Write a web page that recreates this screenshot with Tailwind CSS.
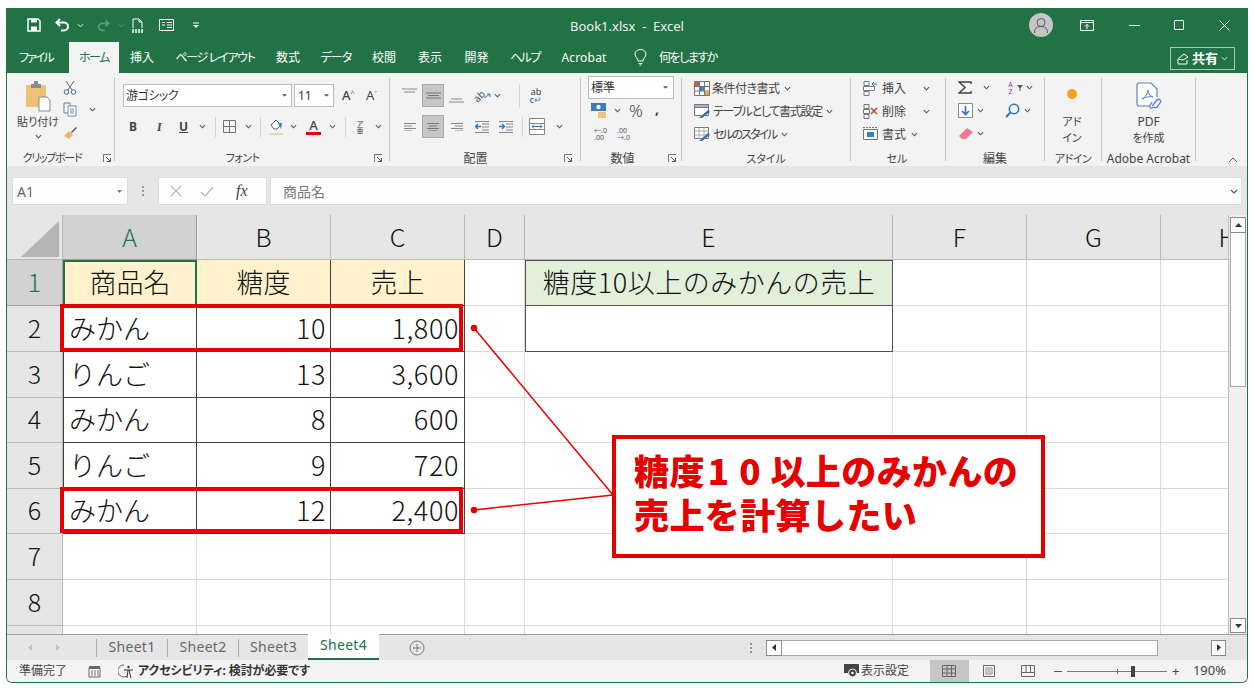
<!DOCTYPE html>
<html lang="ja">
<head>
<meta charset="utf-8">
<title>Book1.xlsx - Excel</title>
<script src="https://cdn.jsdelivr.net/npm/@tailwindcss/browser@4"></script>
</head>
<body class="w-[1254px] h-[688px] overflow-hidden bg-white font-['Noto_Sans','Noto_Sans_CJK_JP',sans-serif]">
<svg class="hidden">
  <symbol id="c" viewBox="0 0 8 5"><path d="M1 1l3 3 3-3" fill="none" stroke="#555" stroke-width="1.2"/></symbol>
  <symbol id="l" viewBox="0 0 9 9"><path d="M.5 8V.5H8" fill="none" stroke="#777"/><path d="M3 3l4.500 4.500M7.500 4v3.500H4" fill="none" stroke="#555"/></symbol>
</svg>

<div class="relative mx-[6px] mt-[8px] w-[1242px] h-[675px] flex flex-col border-x border-b border-[#217346] rounded-b-[6px] overflow-hidden [font-feature-settings:'palt'] text-[#444]">

  <!-- title bar -->
  <div class="h-[34px] flex items-center bg-[#217346] text-white">
    <div class="w-[563px] flex items-center pl-[20px]">
      <svg class="w-[14px] h-[14px]" viewBox="0 0 14 14"><path d="M1 1h10l2 2v10H1z" fill="none" stroke="#fff" stroke-width="1.500"/><path d="M4 1.500h6v3H4z" fill="#fff"/><path d="M4 8.500h6V13H4z" fill="#fff"/></svg>
      <svg class="w-[16px] h-[14px] ml-[14px]" viewBox="0 0 16 14"><path d="M5 1L1.500 4.500 5 8M2 4.500h7a4 4 0 0 1 0 8H6" fill="none" stroke="#fff" stroke-width="2"/></svg>
      <svg class="w-[7px] h-[5px] ml-[6px]" viewBox="0 0 8 5"><path d="M1 1l3 3 3-3" fill="none" stroke="#fff"/></svg>
      <svg class="w-[14px] h-[13px] ml-[12px]" viewBox="0 0 16 14"><path d="M11 1l3.500 3.500L11 8M14 4.500H7a4 4 0 0 0 0 8h3" fill="none" stroke="#5f9a79" stroke-width="2"/></svg>
      <svg class="w-[7px] h-[5px] ml-[8px]" viewBox="0 0 8 5"><path d="M1 1l3 3 3-3" fill="none" stroke="#5f9a79"/></svg>
      <svg class="w-[13px] h-[15px] ml-[6px]" viewBox="0 0 13 15"><path d="M2 10V1h6l3 3v6M8 1v3h3" fill="none" stroke="#fff"/><path d="M1 12h11M1 14h11" stroke="#fff" stroke-dasharray="2 1" stroke-width="1.400"/></svg>
      <svg class="w-[15px] h-[12px] ml-[15px]" viewBox="0 0 15 12"><path d="M.5.500h14v11H.5z" fill="none" stroke="#fff"/><path d="M3 3.500h3M8 3.500h5M3 6h3M8 6h5M8 8.500h5" stroke="#fff"/></svg>
      <svg class="w-[6px] h-[6px] ml-[19px]" viewBox="0 0 6 6"><path d="M0 1h6" stroke="#fff"/><path d="M0 3h6L3 6z" fill="#fff"/></svg>
    </div>
    <div class="text-[13px] mt-[4px] [font-feature-settings:normal] text-[#f0f0f0] whitespace-pre">Book1.xlsx  -  Excel</div>
    <div class="flex-1 flex items-center justify-end">
      <div class="w-[24px] h-[24px] rounded-full bg-[#c6c6c6] flex items-center justify-center mr-[27px]">
        <svg class="w-[18px] h-[18px]" viewBox="0 0 18 18"><circle cx="9" cy="6.500" r="4" fill="none" stroke="#555"/><path d="M2.500 17c0-5 3-6.500 6.500-6.500s6.500 1.500 6.500 6.500" fill="none" stroke="#555"/></svg>
      </div>
      <svg class="w-[14px] h-[11px] mr-[35px]" viewBox="0 0 14 11"><path d="M.5.500h13v10H.5z" fill="none" stroke="#fff"/><path d="M.5 2.500h13" stroke="#fff"/><path d="M7 9V4.500M5 6.500l2-2 2 2" fill="none" stroke="#fff"/></svg>
      <div class="w-[11px] h-px bg-white mr-[34px]"></div>
      <div class="w-[10px] h-[10px] border border-white rounded-[1px] mr-[35px]"></div>
      <svg class="w-[11px] h-[11px] mr-[17px]" viewBox="0 0 11 11"><path d="M.5.500l10 10M10.500.500l-10 10" stroke="#fff"/></svg>
    </div>
  </div>

  <!-- tabs -->
  <div class="h-[31px] flex items-end bg-[#217346] text-white text-[12px] leading-[31px] whitespace-nowrap">
    <div class="w-[57px] ml-[5px] text-left pl-[7px] tracking-[-2px]">ファイル</div>
    <div class="w-[50px] h-[31px] bg-[#f3f3f3] text-[#217346] text-center tracking-[-1.500px]">ホーム</div>
    <div class="w-[46px] text-center">挿入</div>
    <div class="w-[100px] text-center tracking-[-1.300px]">ページ レイアウト</div>
    <div class="w-[46px] text-center">数式</div>
    <div class="w-[50px] text-center tracking-[-1px]">データ</div>
    <div class="w-[46px] text-center">校閲</div>
    <div class="w-[46px] text-center">表示</div>
    <div class="w-[47px] text-center">開発</div>
    <div class="w-[50px] text-center tracking-[-1.500px]">ヘルプ</div>
    <div class="w-[68px] text-center tracking-[0.200px]">Acrobat</div>
    <div class="flex items-center h-[31px] pl-[16px]">
      <svg class="w-[13px] h-[17px]" viewBox="0 0 13 17"><path d="M4 12c0-3-3-3.500-3-7a5.500 4.500 0 0 1 11 0c0 3.500-3 4-3 7zM4.500 14.500h4M5.500 16h2" fill="none" stroke="#fff"/></svg>
      <span class="ml-[12px] tracking-[-1.500px]">何をしますか</span>
    </div>
    <div class="ml-auto mr-[12px] mb-[3px] w-[65px] h-[23px] border border-[#a9c9b6] flex items-center justify-center gap-[3px] leading-none">
      <svg class="w-[12px] h-[12px]" viewBox="0 0 12 12"><path d="M1 6v5h9V7M1 6l6-5 4 3-5 3z" fill="none" stroke="#fff"/></svg>
      <span class="font-bold text-[13px]">共有</span>
      <svg class="w-[7px] h-[5px]" viewBox="0 0 8 5"><path d="M1 1l3 3 3-3" fill="none" stroke="#fff"/></svg>
    </div>
  </div>

  <!-- ribbon -->
  <div class="h-[93px] bg-[#f3f3f3] flex text-[11px] text-[#444]">

    <!-- clipboard -->
    <div class="w-[107px] flex flex-col">
      <div class="h-[78px] flex pl-[9px]">
        <div class="w-[44px] flex flex-col items-center">
          <svg class="w-[26px] h-[32px] mt-[7px]" viewBox="0 0 26 32"><path d="M1 5h20v22H1z" fill="#eec27b"/><path d="M6 4h10v4H6z" fill="#8c8c8c"/><path d="M9 1h4v4H9z" fill="#8c8c8c"/><path d="M14 17h8l3 3v11H14z" fill="#fff" stroke="#8a8a8a"/></svg>
          <div class="mt-[3px] leading-[14px] whitespace-nowrap">貼り付け</div>
          <svg class="w-[7px] h-[5px] mt-[5px]"><use href="#c"/></svg>
        </div>
        <div class="ml-[3px] flex flex-col pt-[7px]">
          <svg class="w-[14px] h-[15px]" viewBox="0 0 14 15"><path d="M3 1l6 9M11 1L5 10" stroke="#666" fill="none"/><circle cx="3.500" cy="12" r="2.300" fill="none" stroke="#3e6f9e"/><circle cx="10.500" cy="12" r="2.300" fill="none" stroke="#3e6f9e"/></svg>
          <div class="flex items-center mt-[7px]">
            <svg class="w-[14px] h-[15px]" viewBox="0 0 14 15"><path d="M1 1h6v10H1z" fill="#fff" stroke="#777"/><path d="M5 4h8v10H5z" fill="#fff" stroke="#6a8fb5"/><path d="M7 7h4M7 9h4M7 11h4" stroke="#6a8fb5"/></svg>
            <svg class="w-[7px] h-[5px] ml-[12px]"><use href="#c"/></svg>
          </div>
          <svg class="w-[15px] h-[14px] mt-[9px]" viewBox="0 0 15 14"><path d="M1 10l5-5 4 4-4 4z" fill="#e3b96c"/><path d="M8 6l5-5 1 1-5 5z" fill="#555"/></svg>
        </div>
      </div>
      <div class="h-[15px] flex items-center">
        <div class="w-[90px] text-center whitespace-nowrap tracking-[-1.300px]">クリップボード</div>
        <svg class="w-[9px] h-[9px] ml-[6px]"><use href="#l"/></svg>
      </div>
    </div>
    <div class="w-px my-[5px] bg-[#c6c6c6]"></div>

    <!-- font -->
    <div class="w-[274px] flex flex-col">
      <div class="h-[78px] pl-[8px]">
        <div class="flex items-center mt-[11px] h-[23px]">
          <div class="w-[169px] h-[23px] bg-white border border-[#bdbdbd] flex items-center px-[2px] text-[12px] text-[#333] tracking-[-0.500px]">游ゴシック<svg class="ml-auto mr-[2px] w-[5px] h-[3px]" viewBox="0 0 6 3"><path d="M0 0h6L3 3z" fill="#555"/></svg></div>
          <div class="w-[40px] h-[23px] ml-[2px] bg-white border border-[#bdbdbd] flex items-center pl-[3px] text-[12px] text-[#333]">11<svg class="ml-auto mr-[4px] w-[5px] h-[3px]" viewBox="0 0 6 3"><path d="M0 0h6L3 3z" fill="#555"/></svg></div>
          <div class="ml-[8px] text-[13px] w-[24px] font-medium">A<sup class="text-[7px] text-[#2b7cc1]">^</sup></div>
          <div class="text-[13px] w-[20px]">A<sup class="text-[7px] text-[#2b7cc1]">ˇ</sup></div>
        </div>
        <div class="flex items-center mt-[8px] h-[23px] text-[#444]">
          <div class="w-[24px] ml-[-2px] pl-[8px] font-bold text-[12px]">B</div>
          <div class="w-[25px] ml-[2px] pl-[10px] italic font-bold text-[12px] font-['Liberation_Serif']">I</div>
          <div class="w-[24px] pl-[7px] font-bold text-[12px] underline">U</div>
          <svg class="w-[7px] h-[5px] ml-[3px]"><use href="#c"/></svg>
          <div class="w-px h-[20px] bg-[#d4d4d4] ml-[9px]"></div>
          <svg class="w-[13px] h-[13px] ml-[7px]" viewBox="0 0 13 13"><path d="M.5.500h12v12H.5zM6.500.500v12M.5 6.500h12" fill="none" stroke="#777"/></svg>
          <svg class="w-[7px] h-[5px] ml-[9px]"><use href="#c"/></svg>
          <div class="w-px h-[20px] bg-[#d4d4d4] ml-[8px]"></div>
          <svg class="w-[16px] h-[19px] ml-[7px]" viewBox="0 0 16 19"><path d="M3 8l5-5 5 5-4 4H6z" fill="#fff" stroke="#666"/><path d="M10 6h4l-1 6z" fill="#3b82c4"/><path d="M1 16h14v2H1z" fill="#cfe3bd"/></svg>
          <svg class="w-[7px] h-[5px] ml-[6px]"><use href="#c"/></svg>
          <div class="w-[15px] ml-[9px] flex flex-col items-center leading-none">
            <span class="text-[13px] font-medium leading-[14px]">A</span>
            <span class="w-[15px] h-[3px] bg-[#e60000]"></span>
          </div>
          <svg class="w-[7px] h-[5px] ml-[8px]"><use href="#c"/></svg>
          <div class="w-px h-[20px] bg-[#d4d4d4] ml-[9px]"></div>
          <div class="ml-[9px] w-[10px] text-[7px] leading-[7px] text-center">ア<br>亜</div>
          <svg class="w-[7px] h-[5px] ml-[10px]"><use href="#c"/></svg>
        </div>
      </div>
      <div class="h-[15px] flex items-center">
        <div class="w-[255px] text-center whitespace-nowrap tracking-[-0.500px]">フォント</div>
        <svg class="w-[9px] h-[9px] ml-[4px]"><use href="#l"/></svg>
      </div>
    </div>
    <div class="w-px my-[5px] bg-[#c6c6c6]"></div>

    <!-- alignment -->
    <div class="w-[190px] flex flex-col">
      <div class="h-[78px] pl-[12px]">
        <div class="flex items-center mt-[11px] h-[23px]">
          <svg class="w-[15px] h-[8px] mb-[8px]" viewBox="0 0 15 8"><path d="M0 1h15M2 4h11" stroke="#888"/></svg>
          <div class="ml-[5px] w-[22px] h-[23px] bg-[#c6c6c6] border border-[#a8a8a8] flex items-center justify-center"><svg class="w-[15px] h-[7px]" viewBox="0 0 15 7"><path d="M0 1h15M2 3.500h11M0 6h15" stroke="#777"/></svg></div>
          <svg class="w-[15px] h-[8px] ml-[5px] mt-[8px]" viewBox="0 0 15 8"><path d="M2 3h11M0 6h15" stroke="#888"/></svg>
          <div class="w-[18px] h-[15px] ml-[9px] flex items-center">
            <span class="-rotate-45 text-[10px] leading-[10px] text-[#555]">ab</span>
            <svg class="w-[7px] h-[5px] -ml-[1px]" viewBox="0 0 7 5"><path d="M0 5l6-4M3 1h3v3" fill="none" stroke="#3b82c4"/></svg>
          </div>
          <svg class="w-[7px] h-[5px] ml-[3px]"><use href="#c"/></svg>
          <div class="w-px h-[24px] bg-[#d4d4d4] ml-[18px]"></div>
          <div class="w-[14px] ml-[9px] text-[9px] leading-[8px] text-center text-[#444]">ab<br>c<span class="text-[#3b82c4]">↵</span></div>
        </div>
        <div class="flex items-center mt-[8px] h-[23px]">
          <svg class="w-[12px] h-[8px] ml-[2px]" viewBox="0 0 12 8"><path d="M0 .5h12M0 3h8M0 5.500h12M0 8h8" stroke="#888"/></svg>
          <div class="ml-[6px] w-[22px] h-[23px] bg-[#c6c6c6] border border-[#a8a8a8] flex items-center justify-center"><svg class="w-[12px] h-[8px]" viewBox="0 0 12 8"><path d="M0 .5h12M2 3h8M0 5.500h12M2 8h8" stroke="#777"/></svg></div>
          <svg class="w-[12px] h-[8px] ml-[7px]" viewBox="0 0 12 8"><path d="M0 .5h12M4 3h8M0 5.500h12M4 8h8" stroke="#888"/></svg>
          <svg class="w-[14px] h-[12px] ml-[12px]" viewBox="0 0 14 12"><path d="M7 3h7M7 6h7M7 9h7M0 .5h14M0 11.500h14" stroke="#888"/><path d="M6 5.500H1M3 3L.5 5.500 3 8" fill="none" stroke="#2b7cc1" stroke-width="1.300"/></svg>
          <svg class="w-[14px] h-[12px] ml-[10px]" viewBox="0 0 14 12"><path d="M7 3h7M7 6h7M7 9h7M0 .5h14M0 11.500h14" stroke="#888"/><path d="M0 5.500h5M3 3l2.500 2.500L3 8" fill="none" stroke="#2b7cc1" stroke-width="1.300"/></svg>
          <div class="w-px h-[20px] bg-[#d4d4d4] ml-[9px]"></div>
          <svg class="w-[16px] h-[17px] ml-[6px]" viewBox="0 0 16 17"><path d="M.5.500h15v16H.5zM.5 5.500h15M.5 11.500h15" fill="#fff" stroke="#888"/><path d="M3 8.500h10M5 6.500l-2 2 2 2M11 6.500l2 2-2 2" fill="none" stroke="#2b7cc1"/></svg>
          <svg class="w-[7px] h-[5px] ml-[11px]"><use href="#c"/></svg>
        </div>
      </div>
      <div class="h-[15px] flex items-center">
        <div class="w-[171px] text-center whitespace-nowrap text-[12px]">配置</div>
        <svg class="w-[9px] h-[9px] ml-[3px]"><use href="#l"/></svg>
      </div>
    </div>
    <div class="w-px my-[5px] bg-[#c6c6c6]"></div>

    <!-- number -->
    <div class="w-[100px] flex flex-col">
      <div class="h-[78px] pl-[7px]">
        <div class="w-[86px] h-[23px] mt-[3px] bg-white border border-[#bdbdbd] flex items-center px-[2px] text-[12px] text-[#333]">標準<svg class="ml-auto mr-[3px] w-[5px] h-[3px]" viewBox="0 0 6 3"><path d="M0 0h6L3 3z" fill="#555"/></svg></div>
        <div class="flex items-center h-[23px] mt-[0px] pl-[3px]">
          <svg class="w-[16px] h-[15px]" viewBox="0 0 16 15"><path d="M0 0h15v8H0z" fill="#3b7dbd"/><circle cx="7.500" cy="4" r="2.200" fill="#fff"/><path d="M7 9h8v6H7z" fill="#eec27b"/></svg>
          <svg class="w-[7px] h-[5px] ml-[7px]"><use href="#c"/></svg>
          <span class="ml-[8px] text-[17px] font-light w-[18px]">%</span>
          <span class="ml-[8px] text-[14px] font-bold leading-none mb-[4px]">,</span>
        </div>
        <div class="flex items-center h-[23px] pl-[6px] text-[7px] leading-[7px] text-[#555]">
          <div class="w-[13px]"><span class="text-[#2b7cc1]">←</span>.0<br>.00</div>
          <div class="w-[13px] ml-[10px]">.00<br><span class="text-[#2b7cc1]">→</span>.0</div>
        </div>
      </div>
      <div class="h-[15px] flex items-center">
        <div class="w-[83px] text-center whitespace-nowrap text-[12px]">数値</div>
        <svg class="w-[9px] h-[9px] ml-[4px]"><use href="#l"/></svg>
      </div>
    </div>
    <div class="w-px my-[5px] bg-[#c6c6c6]"></div>

    <!-- styles -->
    <div class="w-[168px] flex flex-col">
      <div class="h-[78px] pl-[12px] pt-[4px] text-[12px] leading-[23px] whitespace-nowrap">
        <div class="flex items-center h-[23px]">
          <svg class="w-[16px] h-[15px] mr-[2px]" viewBox="0 0 16 15"><path d="M.5.500h15v14H.5zM5.500.500v14M10.500.500v14M.5 5.500h15M.5 10h15" fill="#fff" stroke="#777"/><path d="M1 1h4v4H1z" fill="#d9534f"/><path d="M6 6h4v4H6z" fill="#3b82c4"/><path d="M11 11h4v3h-4z" fill="#e6a23c"/></svg><span class="tracking-[-0.500px]">条件付き書式</span><svg class="w-[7px] h-[5px] ml-[4px]"><use href="#c"/></svg>
        </div>
        <div class="flex items-center h-[23px]">
          <svg class="w-[17px] h-[15px] mr-[2px]" viewBox="0 0 17 15"><path d="M.5.500h14v11H.5z" fill="#fff" stroke="#777"/><path d="M.5.500h14v3H.5z" fill="#9db8d6" stroke="#777"/><path d="M5 14l9-8 2 2-8 6z" fill="#3b6ea5"/></svg><span class="tracking-[-1.300px]">テーブルとして書式設定</span><svg class="w-[7px] h-[5px] ml-[4px]"><use href="#c"/></svg>
        </div>
        <div class="flex items-center h-[23px]">
          <svg class="w-[17px] h-[15px] mr-[2px]" viewBox="0 0 17 15"><path d="M.5.500h14v11H.5z" fill="#fff" stroke="#777"/><path d="M.5 4h14M.5 8h14M5 .5v11M10 .5v11" stroke="#aaa"/><path d="M5 14l9-8 2 2-8 6z" fill="#3b6ea5"/></svg><span class="tracking-[-2px]">セルのスタイル</span><svg class="w-[7px] h-[5px] ml-[5px]"><use href="#c"/></svg>
        </div>
      </div>
      <div class="h-[15px] text-center leading-[15px] whitespace-nowrap">スタイル</div>
    </div>
    <div class="w-px my-[5px] bg-[#c6c6c6]"></div>

    <!-- cells -->
    <div class="w-[94px] flex flex-col">
      <div class="h-[78px] pl-[12px] pt-[4px] text-[12px] whitespace-nowrap">
        <div class="flex items-center h-[23px]">
          <svg class="w-[15px] h-[15px] mr-[4px]" viewBox="0 0 15 15"><path d="M1 .5h5v4H1zM1 10.500h5v4H1zM.5 5.500h11v4H.5z" fill="#fff" stroke="#777"/><path d="M9 3h5M11 1l-2 2 2 2" fill="none" stroke="#2b7cc1"/></svg>挿入<svg class="w-[7px] h-[5px] ml-[17px]"><use href="#c"/></svg>
        </div>
        <div class="flex items-center h-[23px]">
          <svg class="w-[15px] h-[15px] mr-[4px]" viewBox="0 0 15 15"><path d="M1 .5h5v4H1zM1 10.500h5v4H1zM.5 5.500h6v4h-6z" fill="#fff" stroke="#777"/><path d="M8 4l6 6M14 4l-6 6" stroke="#d9432f" stroke-width="1.500"/></svg>削除<svg class="w-[7px] h-[5px] ml-[17px]"><use href="#c"/></svg>
        </div>
        <div class="flex items-center h-[23px]">
          <svg class="w-[15px] h-[15px] mr-[4px]" viewBox="0 0 15 15"><path d="M.5 2.500h14v10H.5z" fill="#fff" stroke="#777"/><path d="M4 5h7v5H4z" fill="#3b7dbd"/><path d="M0 .5h15" stroke="#777" stroke-dasharray="2 1"/></svg>書式<svg class="w-[7px] h-[5px] ml-[5px]"><use href="#c"/></svg>
        </div>
      </div>
      <div class="h-[15px] text-center leading-[15px] whitespace-nowrap pr-[2px]">セル</div>
    </div>
    <div class="w-px my-[5px] bg-[#c6c6c6]"></div>

    <!-- editing -->
    <div class="w-[98px] flex flex-col">
      <div class="h-[78px] pl-[12px] pt-[3px]">
        <div class="flex items-center h-[23px]">
          <svg class="w-[14px] h-[13px]" viewBox="0 0 14 13"><path d="M13 3V1H1l6 5.500L1 12h12v-2" fill="none" stroke="#444" stroke-width="1.500"/></svg>
          <svg class="w-[7px] h-[5px] ml-[11px]"><use href="#c"/></svg>
          <div class="w-[13px] ml-[14px] text-[7px] leading-[7px] text-[#7a3fa0] text-center">A<br>Z</div>
          <svg class="w-[6px] h-[6px]" viewBox="0 0 6 6"><path d="M0 0h6L3.500 3v3h-1V3z" fill="#555"/></svg>
          <svg class="w-[7px] h-[5px] ml-[3px]"><use href="#c"/></svg>
        </div>
        <div class="flex items-center h-[23px]">
          <svg class="w-[15px] h-[15px]" viewBox="0 0 15 15"><path d="M.5.500h14v14H.5z" fill="#fff" stroke="#888"/><path d="M7.500 3v8M4 8l3.500 3.500L11 8" fill="none" stroke="#2b6fb5" stroke-width="1.600"/></svg>
          <svg class="w-[7px] h-[5px] ml-[4px]"><use href="#c"/></svg>
          <svg class="w-[15px] h-[15px] ml-[21px]" viewBox="0 0 15 15"><circle cx="9" cy="6" r="4.700" fill="none" stroke="#2b6fb5" stroke-width="1.500"/><path d="M5.500 9.500L1 14" stroke="#2b6fb5" stroke-width="1.800"/></svg>
          <svg class="w-[7px] h-[5px] ml-[4px]"><use href="#c"/></svg>
        </div>
        <div class="flex items-center h-[23px]">
          <svg class="w-[16px] h-[13px]" viewBox="0 0 16 13"><path d="M1 9l8-8 6 4-7 7H4z" fill="#e77c92"/></svg>
          <svg class="w-[7px] h-[5px] ml-[3px]"><use href="#c"/></svg>
        </div>
      </div>
      <div class="h-[15px] text-center leading-[15px] text-[12px] whitespace-nowrap">編集</div>
    </div>
    <div class="w-px my-[5px] bg-[#c6c6c6]"></div>

    <!-- add-ins -->
    <div class="w-[56px] flex flex-col">
      <div class="h-[78px] flex flex-col items-center pr-[2px]">
        <div class="w-[10px] h-[10px] rounded-full bg-[#f7a021] mt-[16px]"></div>
        <div class="mt-[15px] leading-[16px] text-center">アド<br>イン</div>
      </div>
      <div class="h-[15px] text-center leading-[15px] whitespace-nowrap tracking-[-0.500px]">アドイン</div>
    </div>
    <div class="w-px my-[5px] bg-[#c6c6c6]"></div>

    <!-- acrobat -->
    <div class="w-[93px] flex flex-col">
      <div class="h-[78px] flex flex-col items-center">
        <svg class="w-[27px] h-[28px] mt-[9px]" viewBox="0 0 27 28"><path d="M14 24H4a2 2 0 0 1-2-2V3a2 2 0 0 1 2-2h12l6 6v8" fill="#fff" stroke="#5b7fc7" stroke-width="1.200"/><path d="M7 17c3-1 6-6 6-9 0 4 2 6 5 7-3-1-8 0-11 2z" fill="none" stroke="#5b7fc7"/><path d="M17 24l5-6a2 2 0 0 1 3 3l-3 4a2 2 0 0 1-3 0M19 25l-2 1a2 2 0 0 1-2-3l2-3" fill="none" stroke="#5b7fc7" stroke-width="1.200"/></svg>
        <div class="mt-[4px] leading-[16px] text-center text-[12px]">PDF<br><span class="text-[11px]">を作成</span></div>
      </div>
      <div class="h-[15px] text-center leading-[15px] text-[12px] whitespace-nowrap">Adobe Acrobat</div>
    </div>
    <div class="w-px my-[5px] bg-[#c6c6c6]"></div>

    <div class="flex-1 flex items-end justify-end pr-[9px] pb-[3px]">
      <svg class="w-[10px] h-[6px]" viewBox="0 0 10 6"><path d="M1 5l4-4 4 4" fill="none" stroke="#666"/></svg>
    </div>
  </div>

  <!-- formula bar -->
  <div class="h-[49px] bg-[#e6e6e6] flex items-center pl-[5px] pr-[5px] pt-[1px]">
    <div class="w-[116px] h-[28px] bg-[#fdfdfd] border border-[#dcdcdc] flex items-center pl-[4px] pr-[5px] text-[14px] text-[#666] [font-feature-settings:normal]">A1<svg class="ml-auto w-[5px] h-[3px]" viewBox="0 0 6 3"><path d="M0 0h6L3 3z" fill="#666"/></svg></div>
    <div class="w-[30px] flex justify-center text-[#aaa]"><svg class="w-[2px] h-[10px]" viewBox="0 0 2 10"><path d="M1 0v2M1 4v2M1 8v2" stroke="#999" stroke-width="2"/></svg></div>
    <div class="w-[109px] h-[28px] bg-[#fdfdfd] border border-[#dcdcdc] flex items-center pl-[11px]">
      <svg class="w-[12px] h-[12px]" viewBox="0 0 12 12"><path d="M1 1l10 10M11 1L1 11" stroke="#bbb" stroke-width="1.300"/></svg>
      <svg class="w-[14px] h-[12px] ml-[18px]" viewBox="0 0 14 12"><path d="M1 7l4 4 8-9" fill="none" stroke="#bbb" stroke-width="1.300"/></svg>
      <span class="ml-[22px] italic text-[16px] font-['Liberation_Serif'] text-[#444]">fx</span>
    </div>
    <div class="w-[972px] h-[28px] ml-[3px] bg-[#fdfdfd] border border-[#dcdcdc] flex items-center pl-[12px] pr-[3px] text-[14px] text-[#777] [font-feature-settings:normal]">商品名<svg class="ml-auto w-[8px] h-[5px]"><use href="#c"/></svg></div>
  </div>

  <!-- sheet -->
  <div class="h-[419px] flex">
    <div class="w-[1221px] overflow-hidden">
      <div class="grid w-[1288px] grid-cols-[56px_134px_134px_134px_60px_368px_134px_134px_134px] grid-rows-[45px_46px_46px_46px_45px_46px_45px_46px_46px_8px] font-['Noto_Sans_CJK_JP',sans-serif] [font-feature-settings:normal] text-[27px] font-light text-[#111] leading-none">
        <!-- header row -->
        <div class="bg-[#e6e6e6] border-r border-b border-[#b8b8b8] flex items-end justify-end pr-[3px] pb-[2px]"><div class="w-0 h-0 border-l-[38px] border-l-transparent border-b-[36px] border-b-[#b5b5b5]"></div></div>
        <div class="bg-[#d2d2d2] border-r border-b border-[#9f9f9f] flex items-center justify-center text-[25px] text-[#217346] pb-[1px]">A</div>
        <div class="bg-[#e6e6e6] border-r border-b border-[#b8b8b8] flex items-center justify-center text-[25px] pb-[1px]">B</div>
        <div class="bg-[#e6e6e6] border-r border-b border-[#b8b8b8] flex items-center justify-center text-[25px] pb-[1px]">C</div>
        <div class="bg-[#e6e6e6] border-r border-b border-[#b8b8b8] flex items-center justify-center text-[25px] pb-[1px]">D</div>
        <div class="bg-[#e6e6e6] border-r border-b border-[#b8b8b8] flex items-center justify-center text-[25px] pb-[1px]">E</div>
        <div class="bg-[#e6e6e6] border-r border-b border-[#b8b8b8] flex items-center justify-center text-[25px] pb-[1px]">F</div>
        <div class="bg-[#e6e6e6] border-r border-b border-[#b8b8b8] flex items-center justify-center text-[25px] pb-[1px]">G</div>
        <div class="bg-[#e6e6e6] border-r border-b border-[#b8b8b8] flex items-center justify-center text-[25px] pb-[1px]">H</div>
        <!-- row 1 -->
        <div class="bg-[#d2d2d2] border-r border-b border-[#9f9f9f] flex items-center justify-center text-[25px] text-[#217346] pb-[3px]">1</div>
        <div class="bg-[#fff2cc] border-2 border-[#217346] flex items-center justify-center pb-[3px]">商品名</div>
        <div class="bg-[#fff2cc] border-r border-b border-[#404040] flex items-center justify-center pb-[3px]">糖度</div>
        <div class="bg-[#fff2cc] border-r border-b border-[#404040] flex items-center justify-center pb-[3px]">売上</div>
        <div class="border-r border-b border-[#d9d9d9]"></div>
        <div class="bg-[#e2efda] border border-[#505050] flex items-center justify-center whitespace-nowrap pb-[3px] tracking-[0.500px]">糖度10以上のみかんの売上</div>
        <div class="border-r border-b border-[#d9d9d9]"></div><div class="border-r border-b border-[#d9d9d9]"></div><div class="border-r border-b border-[#d9d9d9]"></div>
        <!-- row 2 -->
        <div class="bg-[#e6e6e6] border-r border-b border-[#b8b8b8] flex items-center justify-center text-[25px] pb-[3px]">2</div>
        <div class="border-r border-b border-[#404040] flex items-center pl-[6px] pb-[3px]">みかん</div>
        <div class="border-r border-b border-[#404040] flex items-center justify-end pr-[4px] pb-[3px] tracking-[0.600px]">10</div>
        <div class="border-r border-b border-[#404040] flex items-center justify-end pr-[5px] pb-[3px] tracking-[0.600px]">1,800</div>
        <div class="border-r border-b border-[#d9d9d9]"></div>
        <div class="border-x border-b border-[#505050]"></div>
        <div class="border-r border-b border-[#d9d9d9]"></div><div class="border-r border-b border-[#d9d9d9]"></div><div class="border-r border-b border-[#d9d9d9]"></div>
        <!-- row 3 -->
        <div class="bg-[#e6e6e6] border-r border-b border-[#b8b8b8] flex items-center justify-center text-[25px] pb-[3px]">3</div>
        <div class="border-l border-r border-b border-[#404040] flex items-center pl-[5px] pb-[3px]">りんご</div>
        <div class="border-r border-b border-[#404040] flex items-center justify-end pr-[4px] pb-[3px] tracking-[0.600px]">13</div>
        <div class="border-r border-b border-[#404040] flex items-center justify-end pr-[5px] pb-[3px] tracking-[0.600px]">3,600</div>
        <div class="border-r border-b border-[#d9d9d9]"></div><div class="border-r border-b border-[#d9d9d9]"></div><div class="border-r border-b border-[#d9d9d9]"></div><div class="border-r border-b border-[#d9d9d9]"></div><div class="border-r border-b border-[#d9d9d9]"></div>
        <!-- row 4 -->
        <div class="bg-[#e6e6e6] border-r border-b border-[#b8b8b8] flex items-center justify-center text-[25px] pb-[3px]">4</div>
        <div class="border-l border-r border-b border-[#404040] flex items-center pl-[5px] pb-[3px]">みかん</div>
        <div class="border-r border-b border-[#404040] flex items-center justify-end pr-[4px] pb-[3px] tracking-[0.600px]">8</div>
        <div class="border-r border-b border-[#404040] flex items-center justify-end pr-[5px] pb-[3px] tracking-[0.600px]">600</div>
        <div class="border-r border-b border-[#d9d9d9]"></div><div class="border-r border-b border-[#d9d9d9]"></div><div class="border-r border-b border-[#d9d9d9]"></div><div class="border-r border-b border-[#d9d9d9]"></div><div class="border-r border-b border-[#d9d9d9]"></div>
        <!-- row 5 -->
        <div class="bg-[#e6e6e6] border-r border-b border-[#b8b8b8] flex items-center justify-center text-[25px] pb-[3px]">5</div>
        <div class="border-l border-r border-b border-[#404040] flex items-center pl-[5px] pb-[3px]">りんご</div>
        <div class="border-r border-b border-[#404040] flex items-center justify-end pr-[4px] pb-[3px] tracking-[0.600px]">9</div>
        <div class="border-r border-b border-[#404040] flex items-center justify-end pr-[5px] pb-[3px] tracking-[0.600px]">720</div>
        <div class="border-r border-b border-[#d9d9d9]"></div><div class="border-r border-b border-[#d9d9d9]"></div><div class="border-r border-b border-[#d9d9d9]"></div><div class="border-r border-b border-[#d9d9d9]"></div><div class="border-r border-b border-[#d9d9d9]"></div>
        <!-- row 6 -->
        <div class="bg-[#e6e6e6] border-r border-b border-[#b8b8b8] flex items-center justify-center text-[25px] pb-[3px]">6</div>
        <div class="border-r border-b border-[#404040] flex items-center pl-[6px] pb-[3px]">みかん</div>
        <div class="border-r border-b border-[#404040] flex items-center justify-end pr-[4px] pb-[3px] tracking-[0.600px]">12</div>
        <div class="border-r border-b border-[#404040] flex items-center justify-end pr-[5px] pb-[3px] tracking-[0.600px]">2,400</div>
        <div class="border-r border-b border-[#d9d9d9]"></div><div class="border-r border-b border-[#d9d9d9]"></div><div class="border-r border-b border-[#d9d9d9]"></div><div class="border-r border-b border-[#d9d9d9]"></div><div class="border-r border-b border-[#d9d9d9]"></div>
        <!-- row 7 -->
        <div class="bg-[#e6e6e6] border-r border-b border-[#b8b8b8] flex items-center justify-center text-[25px] pb-[3px]">7</div>
        <div class="border-r border-b border-[#d9d9d9]"></div><div class="border-r border-b border-[#d9d9d9]"></div><div class="border-r border-b border-[#d9d9d9]"></div><div class="border-r border-b border-[#d9d9d9]"></div><div class="border-r border-b border-[#d9d9d9]"></div><div class="border-r border-b border-[#d9d9d9]"></div><div class="border-r border-b border-[#d9d9d9]"></div><div class="border-r border-b border-[#d9d9d9]"></div>
        <!-- row 8 -->
        <div class="bg-[#e6e6e6] border-r border-b border-[#b8b8b8] flex items-center justify-center text-[25px] pb-[3px]">8</div>
        <div class="border-r border-b border-[#d9d9d9]"></div><div class="border-r border-b border-[#d9d9d9]"></div><div class="border-r border-b border-[#d9d9d9]"></div><div class="border-r border-b border-[#d9d9d9]"></div><div class="border-r border-b border-[#d9d9d9]"></div><div class="border-r border-b border-[#d9d9d9]"></div><div class="border-r border-b border-[#d9d9d9]"></div><div class="border-r border-b border-[#d9d9d9]"></div>
        <!-- row 9 (cut off) -->
        <div class="bg-[#e6e6e6] border-r border-[#b8b8b8]"></div>
        <div class="border-r border-[#d9d9d9]"></div><div class="border-r border-[#d9d9d9]"></div><div class="border-r border-[#d9d9d9]"></div><div class="border-r border-[#d9d9d9]"></div><div class="border-r border-[#d9d9d9]"></div><div class="border-r border-[#d9d9d9]"></div><div class="border-r border-[#d9d9d9]"></div><div class="border-r border-[#d9d9d9]"></div>
      </div>
    </div>
    <!-- vertical scrollbar -->
    <div class="flex-1 bg-[#f0f0f0] border-l border-[#bdbdbd] flex flex-col items-center pt-[2px] pb-[1px]">
      <div class="w-[16px] h-[16px] bg-white border border-[#8a8a8a] flex items-center justify-center"><svg class="w-[7px] h-[4px]" viewBox="0 0 7 4"><path d="M3.500 0L7 4H0z" fill="#333"/></svg></div>
      <div class="w-[16px] h-[154px] bg-white border-x border-b border-[#a8a8a8]"></div>
      <div class="w-[16px] h-[15px] mt-auto bg-white border border-[#8a8a8a] flex items-center justify-center"><svg class="w-[7px] h-[4px]" viewBox="0 0 7 4"><path d="M0 0h7L3.500 4z" fill="#333"/></svg></div>
    </div>
  </div>

  <!-- sheet tabs -->
  <div class="h-[26px] bg-[#e6e6e6] border-t border-[#9f9f9f] flex items-center text-[14px] text-[#666] [font-feature-settings:normal]">
    <div class="w-[89px] flex items-center pl-[21px] gap-[24px] text-[#c4c4c4]">
      <svg class="w-[4px] h-[7px]" viewBox="0 0 4 7"><path d="M4 0v7L0 3.500z" fill="#c4c4c4"/></svg>
      <svg class="w-[4px] h-[7px]" viewBox="0 0 4 7"><path d="M0 0v7l4-3.500z" fill="#c4c4c4"/></svg>
    </div>
    <div class="h-[18px] border-l border-[#aaa] w-[71px] text-center leading-[15px] tracking-[0.300px]">Sheet1</div>
    <div class="h-[18px] border-l border-[#aaa] w-[71px] text-center leading-[15px] tracking-[0.300px]">Sheet2</div>
    <div class="h-[18px] border-l border-[#aaa] w-[70px] text-center leading-[15px] tracking-[0.300px]">Sheet3</div>
    <div class="w-[71px] h-[26px] -mt-[1px] bg-white border-b-2 border-[#217346] text-[#217346] text-center leading-[21px] tracking-[0.300px]">Sheet4</div>
    <svg class="w-[16px] h-[16px] ml-[30px]" viewBox="0 0 16 16"><circle cx="8" cy="8" r="7" fill="none" stroke="#777"/><path d="M8 4v8M4 8h8" stroke="#777"/></svg>
    <svg class="w-[2px] h-[10px] ml-[325px]" viewBox="0 0 2 10"><path d="M1 0v2M1 4v2M1 8v2" stroke="#999" stroke-width="2"/></svg>
    <div class="ml-[14px] w-[460px] h-[16px] flex">
      <div class="w-[16px] h-[16px] bg-white border border-[#8a8a8a] flex items-center justify-center"><svg class="w-[4px] h-[7px]" viewBox="0 0 4 7"><path d="M4 0v7L0 3.500z" fill="#333"/></svg></div>
      <div class="w-[376px] h-[16px] bg-white border-y border-r border-[#a8a8a8]"></div>
      <div class="w-[15px] h-[16px] ml-auto bg-white border border-[#8a8a8a] flex items-center justify-center"><svg class="w-[4px] h-[7px]" viewBox="0 0 4 7"><path d="M0 0v7l4-3.500z" fill="#333"/></svg></div>
    </div>
  </div>

  <!-- status bar -->
  <div class="flex-1 bg-[#f3f3f3] flex items-center text-[12px] text-[#444]">
    <span class="ml-[12px] w-[69px]">準備完了</span>
    <svg class="w-[13px] h-[13px]" viewBox="0 0 13 13"><path d="M1 3h11v9H1z" fill="#fff" stroke="#666"/><path d="M1 1h11v3H1z" fill="#666"/><path d="M3 6h2M6 6h2M9 6h2M3 8h2M6 8h2M9 8h2M3 10h2M6 10h2M9 10h2" stroke="#666"/></svg>
    <svg class="w-[16px] h-[15px] ml-[17px]" viewBox="0 0 16 15"><path d="M6 1a6 6 0 1 0 3 11" fill="none" stroke="#666"/><path d="M6 6h9M10 6l-1 8M11 6l2 8" stroke="#333" fill="none"/><circle cx="10.500" cy="3" r="1.200" fill="#333"/></svg>
    <span class="ml-[4px] font-bold text-[#333] tracking-[-0.100px]">アクセシビリティ: 検討が必要です</span>
    <div class="ml-auto flex items-center h-[21px]">
      <svg class="w-[16px] h-[14px]" viewBox="0 0 16 14"><path d="M0 0h15v9H0z" fill="#444"/><circle cx="8.500" cy="9" r="4" fill="#444" stroke="#f3f3f3"/><circle cx="8.500" cy="9" r="1.300" fill="#f3f3f3"/></svg>
      <span class="ml-[1px] w-[69px]">表示設定</span>
      <div class="w-[39px] h-[22px] bg-[#c6c6c6] flex items-center justify-center"><svg class="w-[14px] h-[12px]" viewBox="0 0 14 12"><path d="M.5.500h13v11H.5zM.5 4h13M.5 8h13M5 .5v11M9.500.500v11" fill="none" stroke="#666"/></svg></div>
      <div class="w-[40px] flex justify-center"><svg class="w-[12px] h-[12px]" viewBox="0 0 12 12"><path d="M.5.500h11v11H.5z" fill="none" stroke="#666"/><path d="M3 3h6v6H3zM4.500 5h3M4.500 7h3" fill="none" stroke="#888"/></svg></div>
      <div class="w-[39px] flex justify-center"><svg class="w-[14px] h-[12px]" viewBox="0 0 14 12"><path d="M.5.500h13v11H.5zM.5 7.500h13M5 .5v7M9.500.500v7" fill="none" stroke="#666"/></svg></div>
      <div class="ml-[6px] w-[8px] h-px bg-[#555]"></div>
      <div class="ml-[5px] w-[100px] h-px bg-[#777] flex items-center pl-[50px]">
        <div class="w-px h-[5px] bg-[#777]"></div>
        <div class="w-[4px] h-[11px] bg-[#444] ml-[13px]"></div>
      </div>
      <span class="ml-[5px] text-[13px] leading-none w-[13px]">+</span>
      <span class="ml-[8px] text-[13px] text-[#444] [font-feature-settings:normal]">190%</span>
      <div class="w-[21px]"></div>
    </div>
  </div>

  <!-- annotations over the sheet -->
  <div class="absolute left-[53px] top-[296px] w-[403px] h-[48px] border-4 border-[#e60000] pointer-events-none"></div>
  <div class="absolute left-[53px] top-[479px] w-[403px] h-[46px] border-4 border-[#e60000] pointer-events-none"></div>
  <svg class="absolute left-0 top-0 w-[1242px] h-[675px] pointer-events-none" viewBox="0 0 1242 675">
    <circle cx="467" cy="320" r="3.200" fill="#e60000"/>
    <circle cx="467" cy="502" r="3.200" fill="#e60000"/>
    <path d="M467 320L606 487M467 502L606 487" fill="none" stroke="#e60000" stroke-width="1.500"/>
  </svg>
  <div class="absolute left-[605px] top-[427px] w-[433px] h-[123px] bg-white border-4 border-[#e60000] pl-[18px] pt-[9px] font-['Noto_Sans_CJK_JP',sans-serif] font-black text-[35px] leading-[44px] text-[#e60000] tracking-[0.400px] whitespace-nowrap [font-feature-settings:normal]">
    <div>糖度<span class="tracking-[10px] ml-[3px]">10</span>以上のみかんの</div>
    <div>売上を計算したい</div>
  </div>
</div>
</body>
</html>
